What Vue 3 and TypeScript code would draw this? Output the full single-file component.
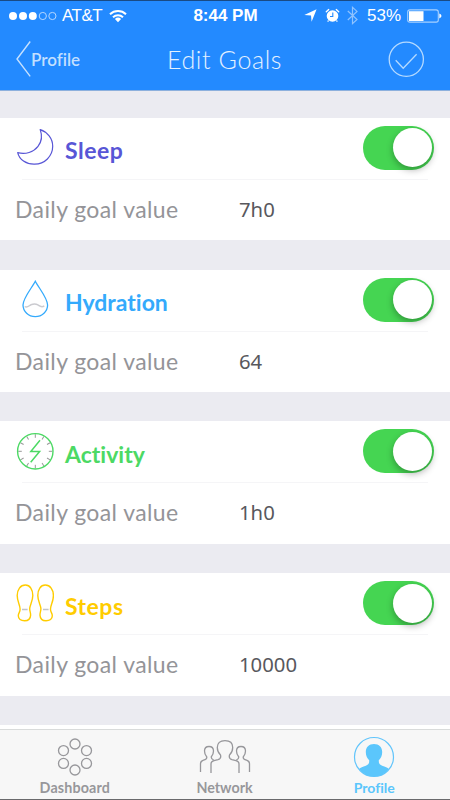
<script setup lang="ts">
import { ref } from 'vue'

type GoalKey = 'sleep' | 'hydration' | 'activity' | 'steps'

interface Goal {
  key: GoalKey
  name: string
  value: string
  enabled: boolean
}

const goals = ref<Goal[]>([
  { key: 'sleep', name: 'Sleep', value: '7h0', enabled: true },
  { key: 'hydration', name: 'Hydration', value: '64', enabled: true },
  { key: 'activity', name: 'Activity', value: '1h0', enabled: true },
  { key: 'steps', name: 'Steps', value: '10000', enabled: true },
])

const ticks: number[] = Array.from({ length: 12 }, (_, i) => i * 30)

const solePath =
  'M9.4 2C14 2 16.8 6.6 16.8 12.4C16.8 18 13.9 22 13.7 25.6C13.6 28.6 14.8 29.4 14.6 32.4C14.4 35.8 12 37.8 8.6 37.8C4.8 37.8 2.3 36 2.3 32.8C2.3 29.8 4.2 29.2 4.1 26C3.9 21.6 1.2 18.600 1.200 12.600C1.200 6.600 4.400 2 9.400 2Z'
</script>

<template>
  <div class="screen">
    <header class="header">
      <div class="status">
        <div class="status-left">
          <svg class="signal" width="48" height="10" viewBox="0 0 48 10">
            <g fill="#fff">
              <circle cx="4" cy="5" r="4" />
              <circle cx="14" cy="5" r="4" />
              <circle cx="23.8" cy="5" r="4" />
            </g>
            <g fill="none" stroke="#b5d7ff" stroke-width="1">
              <circle cx="33.8" cy="5" r="3.6" />
              <circle cx="43.4" cy="5" r="3.6" />
            </g>
          </svg>
          <span class="carrier">AT&amp;T</span>
          <svg class="wifi" width="18" height="14" viewBox="0 0 18 14">
            <g fill="none" stroke="#fff" stroke-width="2">
              <path d="M1 5.2a11.6 11.6 0 0 1 16 0" />
              <path d="M4 8.2a7.2 7.2 0 0 1 10 0" />
            </g>
            <path d="M5.9 10a4.6 4.6 0 0 1 6.2 0L9 13.2z" fill="#fff" />
          </svg>
        </div>
        <span class="time">8:44 PM</span>
        <div class="status-right">
          <svg width="13" height="13" viewBox="0 0 13 13"><path d="M12.6.3 7.6 12.7 7 6.5.3 6z" fill="#fff" /></svg>
          <svg class="alarm" width="15" height="15" viewBox="0 0 15 15">
            <circle cx="7.5" cy="8" r="5.8" fill="#fff" />
            <path d="M1.300 3.800 3.700 1.600M13.700 3.800 11.300 1.600" stroke="#fff" stroke-width="1.400" stroke-linecap="round" />
            <path d="M3.500 12.500 2.700 13.700M11.500 12.500 12.300 13.700" stroke="#fff" stroke-width="1.300" />
            <path d="M7.8 4.5v4H5" fill="none" stroke="#238aff" stroke-width="1.1" />
          </svg>
          <svg class="bt" width="11" height="19" viewBox="0 0 11 19">
            <path d="M.8 5 10 13.5 5.5 17.6V1.3L10 5.4.8 14" fill="none" stroke="#8fc3ff" stroke-width="1.2" />
          </svg>
          <span class="percent">53%</span>
          <svg class="battery" width="35" height="14" viewBox="0 0 35 14">
            <rect x=".7" y=".9" width="30.6" height="12.2" rx="2.2" fill="none" stroke="#a8d1ff" stroke-width="1.1" />
            <rect x="2" y="2.2" width="14.5" height="9.8" fill="#fff" />
            <path d="M32.3 4.6q2.2 1 2.2 2.4t-2.2 2.4z" fill="#fff" />
          </svg>
        </div>
      </div>
      <nav class="navbar">
        <a class="back">
          <svg width="15" height="38" viewBox="0 0 15 38"><path d="M14.200 1.500 1 19l13.200 17.300" fill="none" stroke="#c6e1ff" stroke-width="1.4" /></svg>
          <span>Profile</span>
        </a>
        <h1 class="title">Edit Goals</h1>
        <svg class="confirm" width="37" height="37" viewBox="0 0 37 37">
          <g fill="none" stroke="#b5daff" stroke-width="1.3">
            <circle cx="18.3" cy="18.3" r="17.1" />
            <path d="m7.7 19.3 7.5 8L28.6 13.3" />
          </g>
        </svg>
      </nav>
    </header>

    <main class="goals">
      <section v-for="goal in goals" :key="goal.key" class="card" :class="goal.key">
        <div class="card-head">
          <svg class="icon" width="38" height="40" viewBox="0 0 38 40" fill="none">
            <path v-if="goal.key === 'sleep'" d="M24.2 2.6C31.400 5 36.700 11.500 36.700 19.300A18 18 0 0 1 18.700 37.200C10 37.500 3.200 32.500 1.700 25.700C9.500 27.600 17.500 25.300 22 19.400C25.800 14.400 26.200 8 24.200 2.600Z" stroke="currentColor" stroke-width="1.2" stroke-linejoin="round" />
            <template v-else-if="goal.key === 'hydration'">
              <path d="M8.700 27.500c2.600 2.200 4.600-1.300 6.800-2 2.400-.9 4.200-.9 6.400.4 1.800 1.200 3.500 3 6.400 1" stroke="#cbcbd0" stroke-width="1.500" />
              <path d="M19.300 2.200C16 8.800 7 19 7 26.100a12.300 11.500 0 0 0 24.600 0C31.600 19 22.600 8.800 19.300 2.200Z" stroke="currentColor" stroke-width="1.300" />
            </template>
            <template v-else-if="goal.key === 'activity'">
              <path v-for="angle in ticks" :key="angle" d="M19.300 3.200v3.600" :transform="`rotate(${angle} 19.300 20.300)`" stroke="#999" stroke-width="1" />
              <circle cx="19.300" cy="20.300" r="17.700" stroke="currentColor" stroke-width="1.400" />
              <path d="M24 9.200 14.800 20.600H23.600L14.700 31.200" stroke="currentColor" stroke-width="1.500" />
            </template>
            <template v-else>
              <path d="M6 26.500h5.600M27 26.500h5.600" stroke="#c4c4c8" stroke-width="1.400" />
              <g stroke="currentColor" stroke-width="1.400">
                <path :d="solePath" />
                <path :d="solePath" transform="matrix(-1 0 0 1 38.600 0)" />
              </g>
            </template>
          </svg>
          <h2 class="name">{{ goal.name }}</h2>
          <button class="switch" type="button" role="switch" :aria-checked="goal.enabled" @click="goal.enabled = !goal.enabled">
            <span class="knob"></span>
          </button>
        </div>
        <div class="card-row">
          <span class="label">Daily goal value</span>
          <span class="value">{{ goal.value }}</span>
        </div>
      </section>
    </main>

    <footer class="tabbar">
      <a class="tab dashboard">
        <svg width="36" height="38" viewBox="0 0 36 38" fill="none" stroke="#97979b" stroke-width="1.300">
          <circle cx="18" cy="6" r="5" />
          <circle cx="29.500" cy="12.600" r="5" />
          <circle cx="29.500" cy="25.400" r="5" />
          <circle cx="18" cy="32" r="5" />
          <circle cx="6.500" cy="25.400" r="5" />
          <circle cx="6.500" cy="12.600" r="5" />
        </svg>
        <span>Dashboard</span>
      </a>
      <a class="tab network">
        <svg width="52" height="38" viewBox="0 0 52 38" fill="none" stroke="#97979b" stroke-width="1.300">
          <path d="M1.500 34V26q0-3 3-3.800Q8 21.500 7.800 19 5.500 16.500 5.500 13q0-4.500 4.500-4.500t4.500 4.500q0 3.500-2.300 6 0 2 2.500 3" />
          <path d="M50.500 34V26q0-3-3-3.800-3.500-.7-3.300-3.200 2.300-2.500 2.300-6 0-4.500-4.500-4.500t-4.500 4.500q0 3.500 2.300 6 0 2-2.500 3" />
          <path d="M12 35V26q0-2.500 3-3.300l4-1q3.500-1 2.500-4.700Q18.300 14 18.300 9.500q0-6.800 7.700-6.800t7.700 6.800q0 4.500-3.200 7.500-1 3.700 2.500 4.700l4 1q3 .8 3 3.300v9" />
        </svg>
        <span>Network</span>
      </a>
      <a class="tab profile">
        <svg width="42" height="42" viewBox="0 0 42 42">
          <circle cx="21" cy="21" r="19.500" fill="none" stroke="#62c5fb" stroke-width="1.200" />
          <path d="M21 8c5 0 8.200 3 8.200 8 0 4-1.600 6.500-3.400 8.300-.2 3.200.8 4.400 3.400 5.400 3 1.100 5.400 1.600 6.700 3.200A19 19 0 0 1 21 40.500 19 19 0 0 1 6.100 32.900c1.300-1.600 3.700-2.100 6.700-3.200 2.600-1 3.600-2.200 3.400-5.400-1.800-1.800-3.400-4.300-3.400-8.300 0-5 3.200-8 8.200-8z" fill="#5bc6fc" />
        </svg>
        <span>Profile</span>
      </a>
    </footer>
  </div>
</template>

<style>
body {
  margin: 0;
}
</style>

<style scoped>
.screen {
  display: flex;
  flex-direction: column;
  width: 450px;
  height: 800px;
  overflow: hidden;
  box-sizing: border-box;
  background: #ebebf1;
  border-top: 1px solid #194a84;
  border-bottom: 1px solid #6a6a6c;
  font-family: Lato, "Liberation Sans", sans-serif;
  font-variant-ligatures: none;
}
.header {
  box-sizing: border-box;
  height: 90px;
  flex: none;
  background: #238aff;
  border-bottom: 1px solid #8db0dd;
  color: #fff;
}
.status {
  display: grid;
  grid-template-columns: 1fr auto 1fr;
  align-items: center;
  height: 29px;
  padding: 0 8px 0 9px;
  font-family: "Liberation Sans", Arial, sans-serif;
  font-size: 17px;
}
.status-left,
.status-right {
  display: flex;
  align-items: center;
}
.status-right {
  justify-content: flex-end;
}
.carrier {
  margin-left: 5px;
  letter-spacing: -0.5px;
}
.wifi {
  margin-left: 7px;
}
.time {
  font-weight: 700;
  font-size: 17px;
}
.alarm {
  margin-left: 8px;
}
.bt {
  margin-left: 7px;
}
.percent {
  margin-left: 9px;
}
.battery {
  margin-left: 6px;
}
.navbar {
  display: grid;
  grid-template-columns: 1fr auto 1fr;
  align-items: center;
  height: 58px;
  padding: 0 25px 0 16px;
}
.back {
  display: flex;
  align-items: center;
  font-size: 17px;
  font-weight: 600;
  color: #c2dfff;
}
.title {
  margin: 0 0 0 8px;
  font-size: 25px;
  font-weight: 300;
  letter-spacing: 0.600px;
  color: #e4f1ff;
}
.confirm {
  justify-self: end;
}
.goals {
  display: flex;
  flex-direction: column;
  gap: 29.200px;
  flex: none;
  height: 638px;
  padding-top: 26.800px;
  box-sizing: border-box;
}
.card {
  height: 122.600px;
  flex: none;
  background: #fff;
}
.card-head {
  display: flex;
  align-items: center;
  height: 61px;
  padding: 0 16px;
}
.icon {
  flex: none;
  margin-top: -2px;
}
.name {
  flex: 1;
  margin: 4px 0 0 11px;
  font-size: 23px;
  font-weight: 700;
}
.sleep .name,
.steps .name {
  letter-spacing: 0.500px;
}
.sleep .card-head { color: #5856d6; }
.hydration .card-head { color: #34aafc; }
.activity .card-head { color: #4cd964; }
.steps .card-head { color: #ffcc00; }
.switch {
  flex: none;
  display: flex;
  justify-content: flex-end;
  align-items: center;
  width: 71px;
  height: 44px;
  margin-top: -1px;
  padding: 0 2px;
  border: 0;
  border-radius: 22px;
  background: #b9b9be;
}
.switch[aria-checked="false"] {
  justify-content: flex-start;
}
.switch[aria-checked="true"] {
  background: #45d552;
}
.knob {
  width: 39px;
  height: 39px;
  border-radius: 50%;
  background: #fff;
  box-shadow: 0 3px 7px rgba(0, 0, 0, 0.3);
}
.card-row {
  display: grid;
  grid-template-columns: 224px 1fr;
  align-items: center;
  height: 60px;
  padding: 0 14px 0 15px;
  background: linear-gradient(#f5f5f7, #f5f5f7) 22px 0 / 406px 1px no-repeat;
}
.label {
  font-size: 23px;
  letter-spacing: 0.400px;
  color: #949498;
}
.value {
  font-family: "Noto Sans", "Open Sans", sans-serif;
  font-size: 20.300px;
  color: #58585d;
}
.tabbar {
  flex: 1;
  display: grid;
  grid-template-columns: repeat(3, 149.700px);
  border-top: 1px solid #d9dbdb;
  box-shadow: 0 -4px 0 #fff;
  background: #f7f7f7;
}
.tab {
  display: flex;
  flex-direction: column;
  align-items: center;
  justify-content: space-between;
  box-sizing: border-box;
  height: 66px;
  font-size: 14.300px;
  font-weight: 700;
  line-height: 16px;
  color: #97979b;
}
.tab svg {
  flex: none;
}
.dashboard,
.network {
  padding-top: 8px;
}
.dashboard {
  letter-spacing: 0.150px;
}
.profile {
  padding-top: 6px;
  font-size: 14px;
  color: #5bc6fc;
}
</style>
